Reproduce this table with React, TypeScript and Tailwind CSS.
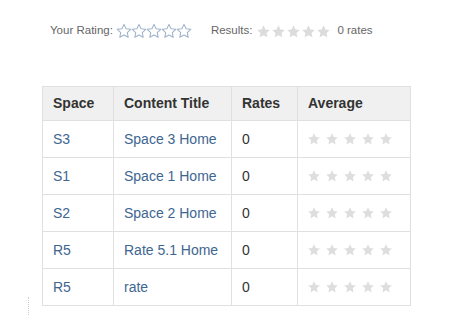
import React from "react";

const STAR = "M12 2.5l2.9 6.1 6.6.8-4.9 4.6 1.3 6.6L12 17.3l-5.9 3.3 1.3-6.6-4.9-4.6 6.6-.8z";
const VB = "2.2 2 19.6 19.6";

function OutlineStar() {
  return (
    <svg width="14" height="14" viewBox={VB} className="block overflow-visible">
      <path d={STAR} fill="#fff" stroke="#9fb4ca" strokeWidth="1.5" strokeLinejoin="round" />
    </svg>
  );
}

function FilledStar({ size = 13, color = "#dcdcdc" }: { size?: number; color?: string }) {
  return (
    <svg width={size} height={size} viewBox={VB} className="block">
      <path d={STAR} fill={color} />
    </svg>
  );
}

const rows = [
  ["S3", "Space 3 Home"],
  ["S1", "Space 1 Home"],
  ["S2", "Space 2 Home"],
  ["R5", "Rate 5.1 Home"],
  ["R5", "rate"],
];

export default function App() {
  return (
    <div className="w-[450px] h-[330px] bg-white relative overflow-hidden" style={{ fontFamily: '"Liberation Sans", Arial, sans-serif' }}>
      <div className="flex items-center pl-[50px] pt-[24px] h-[38px] text-[11.5px] text-[#666]">
        <span>Your Rating:</span>
        <div className="flex ml-[4px] gap-[1px]">
          <OutlineStar />
          <OutlineStar />
          <OutlineStar />
          <OutlineStar />
          <OutlineStar />
        </div>
        <span className="ml-[20px]">Results:</span>
        <div className="flex ml-[5px] gap-[2px]">
          <FilledStar />
          <FilledStar />
          <FilledStar />
          <FilledStar />
          <FilledStar />
        </div>
        <span className="ml-[7px]">0 rates</span>
      </div>
      <div className="pl-[42px] pt-[48px]">
        <table className="border-collapse table-fixed w-[368px] text-[14px] text-[#333]">
          <colgroup>
            <col className="w-[71px]" />
            <col className="w-[118px]" />
            <col className="w-[66px]" />
            <col className="w-[113px]" />
          </colgroup>
          <thead>
            <tr className="h-[34px] bg-[#f0f0f0]">
              <th className="border border-[#e0e0e0] text-left font-bold px-[10px]">Space</th>
              <th className="border border-[#e0e0e0] text-left font-bold px-[10px]">Content Title</th>
              <th className="border border-[#e0e0e0] text-left font-bold px-[10px]">Rates</th>
              <th className="border border-[#e0e0e0] text-left font-bold px-[10px]">Average</th>
            </tr>
          </thead>
          <tbody>
            {rows.map(([s, t], i) => (
              <tr key={i} className="h-[37px]">
                <td className="border border-[#e0e0e0] px-[10px] text-[#3e6690]">{s}</td>
                <td className="border border-[#e0e0e0] px-[10px] text-[#3e6690] whitespace-nowrap">{t}</td>
                <td className="border border-[#e0e0e0] px-[10px]">0</td>
                <td className="border border-[#e0e0e0] pl-[10px]">
                  <div className="flex gap-[6px]">
                    <FilledStar size={12} color="#dedede" />
                    <FilledStar size={12} color="#dedede" />
                    <FilledStar size={12} color="#dedede" />
                    <FilledStar size={12} color="#dedede" />
                    <FilledStar size={12} color="#dedede" />
                  </div>
                </td>
              </tr>
            ))}
          </tbody>
        </table>
      </div>
      <div className="absolute left-[28px] top-[297px] h-[18px] border-l border-dotted border-[#ccc]" />
    </div>
  );
}
